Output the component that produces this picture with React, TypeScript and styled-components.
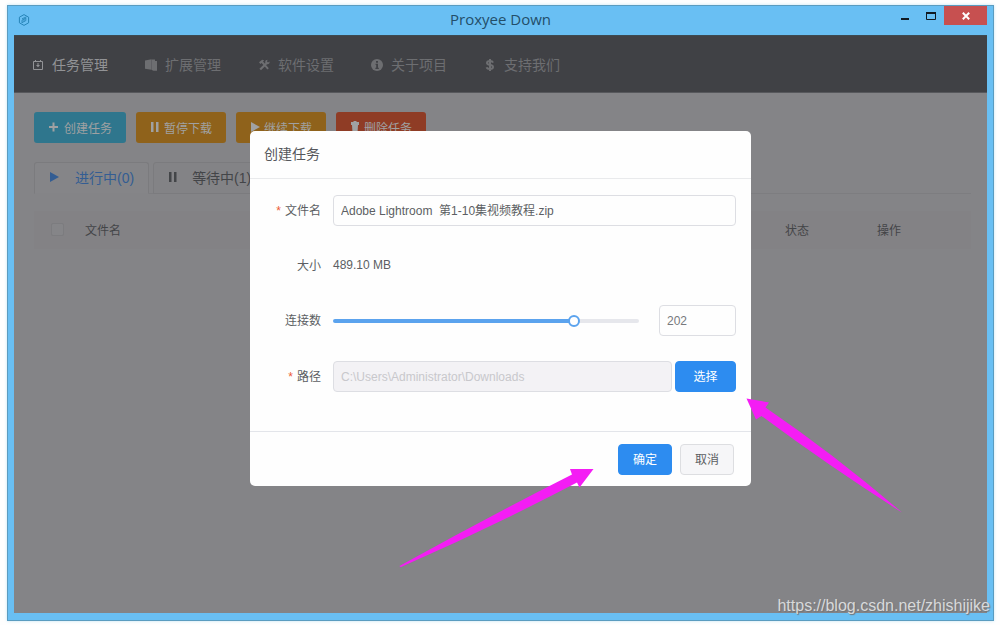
import React, { useState } from "react";
import styled, { createGlobalStyle } from "styled-components";

const GlobalStyle = createGlobalStyle`
  *, *::before, *::after { box-sizing: border-box; }
  body {
    margin: 0;
    background: #fefefe;
    font-family: "Liberation Sans", "Noto Sans CJK SC", sans-serif;
    font-size: 12px;
    color: #5c5e63;
  }
  button, input { font: inherit; }
`;

const Page = styled.div`
  display: flex;
  min-height: 100vh;
  padding: 5px 6px 4px 7px;
`;

const Window = styled.div`
  position: relative;
  flex: 1;
  min-width: 0;
  display: flex;
  flex-direction: column;
  padding: 0 6px 7px;
  background: #69bff3;
  border: 1px solid #5a9cc0;
  box-shadow: 0 0 3px #c4e4f4;
`;

const TitleBar = styled.header`
  display: grid;
  grid-template-columns: 1fr auto 1fr;
  height: 29px;
`;

const AppMark = styled.svg`
  width: 12px;
  height: 12px;
  margin: 8px 0 0 4px;
`;

const WindowTitle = styled.h1`
  margin: 0;
  font: 400 15px/27px "Open Sans", "Noto Sans", sans-serif;
  color: #234e69;
`;

const WindowControls = styled.div`
  display: flex;
  justify-content: flex-end;
  align-items: flex-start;
`;

const WindowButton = styled.button<{ $close?: boolean }>`
  display: flex;
  align-items: center;
  justify-content: center;
  width: ${(p) => (p.$close ? 43 : 26)}px;
  height: 19px;
  padding: 0;
  border: 0;
  background: ${(p) => (p.$close ? "#c75050" : "transparent")};
  color: ${(p) => (p.$close ? "#fff" : "#111a22")};
`;

const Client = styled.div`
  position: relative;
  flex: 1;
  display: flex;
  flex-direction: column;
  background: #848487;
`;

const Nav = styled.nav`
  display: flex;
  align-items: center;
  gap: 37px;
  height: 58px;
  padding: 1px 0 0 18px;
  background: #404145;
  border-top: 1px solid #3c4a52;
  border-bottom: 1px solid #57585c;
`;

const NavItem = styled.a<{ $active?: boolean }>`
  display: flex;
  align-items: center;
  gap: 8px;
  font-size: 14px;
  line-height: 20px;
  text-decoration: none;
  white-space: nowrap;
  color: ${(p) => (p.$active ? "#929396" : "#6d6e71")};
`;

const Content = styled.main`
  display: flex;
  flex-direction: column;
  padding: 19px 16px 20px 20px;
`;

const Toolbar = styled.div`
  display: flex;
  gap: 10px;
`;

const ToolButton = styled.button<{ $color: string }>`
  display: flex;
  align-items: center;
  gap: 4px;
  height: 31px;
  padding: 0 14px 1px;
  border: 0;
  border-radius: 3px;
  background: ${(p) => p.$color};
  color: #a0a1a2;
  white-space: nowrap;
`;

const Tabs = styled.div`
  display: flex;
  gap: 4px;
  margin-top: 19px;
  border-bottom: 1px solid #7d7d80;
`;

const Tab = styled.button<{ $active?: boolean }>`
  display: flex;
  align-items: center;
  gap: 14px;
  height: 32px;
  margin-bottom: -1px;
  padding: 0 14px 2px;
  border: 1px solid #7b7b7e;
  border-bottom-color: ${(p) => (p.$active ? "#848487" : "#7b7b7e")};
  border-radius: 3px 3px 0 0;
  background: ${(p) => (p.$active ? "#858588" : "#838386")};
  color: ${(p) => (p.$active ? "#335d93" : "#434548")};
  font-size: 14px;
  white-space: nowrap;
`;

const TaskTable = styled.table`
  width: 100%;
  margin-top: 17px;
  border-collapse: collapse;
  table-layout: fixed;
`;

const HeadCell = styled.th<{ $width?: number }>`
  width: ${(p) => (p.$width ? `${p.$width}px` : "auto")};
  height: 38px;
  padding: 0 10px 2px;
  background: #838285;
  color: #434548;
  font-weight: 400;
  text-align: left;
`;

const CheckBox = styled.input`
  appearance: none;
  display: block;
  width: 13px;
  height: 13px;
  margin: 0 0 0 7px;
  border: 1px solid #7c7c7f;
  border-radius: 2px;
  background: #858588;
`;

const Mask = styled.div`
  position: absolute;
  inset: 0;
  display: flex;
  justify-content: center;
  align-items: flex-start;
  padding-top: 96px;
`;

const Dialog = styled.form`
  position: relative;
  width: 501px;
  border-radius: 5px;
  background: #fefefe;
`;

const DialogTitle = styled.h2`
  margin: 0;
  padding: 0 14px;
  border-bottom: 1px solid #e9eaec;
  font-size: 14px;
  font-weight: 400;
  line-height: 47px;
  color: #55575c;
`;

const DialogBody = styled.div`
  display: flex;
  flex-direction: column;
  gap: 24px;
  padding: 16px 15px 39px;
`;

const Row = styled.div`
  display: flex;
  align-items: center;
  min-height: 30px;
`;

const SliderRow = styled(Row)`
  min-height: 33px;
`;

const Label = styled.label<{ $required?: boolean }>`
  width: 68px;
  padding: 0 12px 2px 0;
  text-align: right;
  white-space: nowrap;
  &::before {
    content: ${(p) => (p.$required ? '"*"' : "none")};
    margin-right: 4px;
    color: #ed5a35;
  }
`;

const TextBox = styled.input`
  flex: 1;
  min-width: 0;
  height: 31px;
  padding: 0 7px 2px;
  border: 1px solid #dddee3;
  border-radius: 4px;
  background: #fefefe;
  color: #5c5e63;
  &:disabled {
    padding-bottom: 0;
    background: #f3f2f5;
    color: #c8c8cc;
  }
`;

const NumberBox = styled(TextBox)`
  flex: 0 0 77px;
  margin-left: 20px;
  padding-bottom: 0;
  color: #77797d;
`;

const Rail = styled.div`
  flex: 1;
  display: flex;
  align-items: center;
  height: 4px;
  border-radius: 2px;
  background: linear-gradient(to right, #5ba3ee var(--fill), #e6e7ec var(--fill));
`;

const Range = styled.input`
  appearance: none;
  flex: none;
  width: calc(100% + 12px);
  height: 12px;
  margin: 0 -6px;
  background: transparent;
  &::-webkit-slider-thumb {
    appearance: none;
    width: 12px;
    height: 12px;
    border: 2px solid #5ba3ee;
    border-radius: 50%;
    background: #fff;
  }
`;

const Button = styled.button<{ $primary?: boolean; $wide?: boolean }>`
  width: ${(p) => (p.$wide ? 61 : 54)}px;
  height: 31px;
  padding: 0 0 2px;
  border: 1px solid ${(p) => (p.$primary ? "#2d8cf0" : "#dddee1")};
  border-radius: 4px;
  background: ${(p) => (p.$primary ? "#2d8cf0" : "#f6f6f8")};
  color: ${(p) => (p.$primary ? "#fff" : "#5c5e63")};
`;

const PathGroup = styled.div`
  flex: 1;
  display: flex;
  gap: 3px;
`;

const DialogFooter = styled.footer`
  display: flex;
  justify-content: flex-end;
  gap: 8px;
  padding: 12px 17px 11px;
  border-top: 1px solid #e3e5ea;
`;

const Pointers = styled.svg`
  position: absolute;
  top: 0;
  left: 0;
  width: 100%;
  height: 100%;
  overflow: visible;
  pointer-events: none;
`;

const Watermark = styled.a`
  position: absolute;
  right: 3px;
  bottom: 4px;
  font-size: 16px;
  line-height: 20px;
  color: #d8d9da;
  text-decoration: none;
  text-shadow: 1px 1px 1px #707376;
`;

const Icon = ({ width = 12, children }: { width?: number; children: React.ReactNode }) => (
  <svg width={width} height="12" viewBox={`0 0 ${width} 12`} fill="currentColor" aria-hidden="true">
    {children}
  </svg>
);

const PauseIcon = () => (
  <Icon width={10}>
    <path d="M1 1h2.500v10H1zM6 1h2.500v10H6z" />
  </Icon>
);

const PlayIcon = ({ width = 10 }: { width?: number }) => (
  <Icon width={width}>
    <path d="M1 1l9 5-9 5z" />
  </Icon>
);

const MAX_CONNECTIONS = 256;

export default function App() {
  const [name, setName] = useState("Adobe Lightroom  第1-10集视频教程.zip");
  const [connections, setConnections] = useState(202);
  const fill = `${((connections - 1) / (MAX_CONNECTIONS - 1)) * 100}%`;

  return (
    <Page>
      <GlobalStyle />
      <Window>
        <TitleBar>
          <AppMark viewBox="0 0 12 12" fill="none" stroke="#2684b8" aria-hidden="true">
            <path d="M6 .6l4.600 2.600v5.600L6 11.400 1.400 8.800V3.200z" />
            <path d="M4 9V6.200L7.800 4v2.600L4 8.600M4 4.800l4.600-2M6 5v2.400" strokeWidth=".9" />
          </AppMark>
          <WindowTitle>Proxyee Down</WindowTitle>
          <WindowControls>
            <WindowButton type="button" aria-label="最小化">
              <svg width="8" height="12" viewBox="0 0 8 12">
                <path d="M0 8h8v2H0z" fill="currentColor" />
              </svg>
            </WindowButton>
            <WindowButton type="button" aria-label="最大化">
              <svg width="10" height="8" viewBox="0 0 10 8">
                <path d="M.5 1v6.500h9V1" fill="none" stroke="currentColor" />
                <path d="M0 0h10v2H0z" fill="currentColor" />
              </svg>
            </WindowButton>
            <WindowButton type="button" $close aria-label="关闭">
              <svg width="8" height="8" viewBox="0 0 8 8">
                <path d="M.8.8l6.400 6.400M7.200.8L.8 7.200" stroke="currentColor" strokeWidth="2" />
              </svg>
            </WindowButton>
          </WindowControls>
        </TitleBar>

        <Client>
          <Nav>
            <NavItem href="#tasks" $active>
              <Icon>
                <path d="M1.500 2.500h9v8h-9zM3.500 1v1.500M8.500 1v1.500" fill="none" stroke="currentColor" />
                <path d="M5.500 4h1v2H8L6 8.200 4 6h1.500z" />
              </Icon>
              任务管理
            </NavItem>
            <NavItem href="#extensions">
              <Icon>
                <path d="M0 1.500L6.500.2v10.600L0 9.800zM6.800.5H10V2h2v9.800H8.500L6.800 11z" />
              </Icon>
              扩展管理
            </NavItem>
            <NavItem href="#settings">
              <Icon>
                <path d="M1 3.200L4.200.8l2 .4L5 2.600l5.800 6.600-1.400 1.400L3.600 4 2.400 5zM8 1.200L9.600.8 9 2.600l1 .8 1.600-.8c.3 1.800-1 3-2.600 2.600L3 11.200 1.400 9.800 7.400 4C7 2.800 7.200 1.800 8 1.200z" />
              </Icon>
              软件设置
            </NavItem>
            <NavItem href="#about">
              <Icon>
                <circle cx="6" cy="6" r="6" />
                <path d="M5 2h2v1.800H5zM4.600 4.800H7v4h.8V10H4.400V8.800h.8V6h-.6z" fill="#404145" />
              </Icon>
              关于项目
            </NavItem>
            <NavItem href="#support">
              <Icon>
                <path d="M9 3.600C8.600 2.400 7.400 2 6 2 4.300 2 3 2.600 3 3.900 3 6.700 9 4.900 9 8 9 9.400 7.600 10 6 10 4.300 10 3 9.500 2.600 8.200M6 0v12" fill="none" stroke="currentColor" strokeWidth="2" />
              </Icon>
              支持我们
            </NavItem>
          </Nav>

          <Content>
            <Toolbar>
              <ToolButton type="button" $color="#2f768d">
                <Icon>
                  <path d="M4.500 1.500h2v3.500H10v2H6.500v3.500h-2V7H1V5h3.500z" />
                </Icon>
                创建任务
              </ToolButton>
              <ToolButton type="button" $color="#8f621b">
                <PauseIcon />
                暂停下载
              </ToolButton>
              <ToolButton type="button" $color="#8f621b">
                <PlayIcon />
                继续下载
              </ToolButton>
              <ToolButton type="button" $color="#8f3c25">
                <Icon width={10}>
                  <path d="M3.500 0h3v1H9v3H8l-.5 8h-5L2 4H1V1h2.500z" />
                </Icon>
                删除任务
              </ToolButton>
            </Toolbar>

            <Tabs role="tablist">
              <Tab type="button" role="tab" aria-selected="true" $active>
                <PlayIcon width={12} />
                进行中(0)
              </Tab>
              <Tab type="button" role="tab" aria-selected="false">
                <PauseIcon />
                等待中(1)
              </Tab>
            </Tabs>

            <TaskTable>
              <thead>
                <tr>
                  <HeadCell $width={41}>
                    <CheckBox type="checkbox" aria-label="全选" />
                  </HeadCell>
                  <HeadCell>文件名</HeadCell>
                  <HeadCell $width={92}>状态</HeadCell>
                  <HeadCell $width={104}>操作</HeadCell>
                </tr>
              </thead>
            </TaskTable>
          </Content>

          <Mask>
            <Dialog role="dialog" aria-labelledby="dialog-title" onSubmit={(e) => e.preventDefault()}>
              <DialogTitle id="dialog-title">创建任务</DialogTitle>
              <DialogBody>
                <Row>
                  <Label htmlFor="file-name" $required>文件名</Label>
                  <TextBox id="file-name" value={name} onChange={(e) => setName(e.target.value)} />
                </Row>
                <Row>
                  <Label as="span">大小</Label>
                  <span>489.10 MB</span>
                </Row>
                <SliderRow>
                  <Label htmlFor="connections">连接数</Label>
                  <Rail style={{ "--fill": fill } as React.CSSProperties}>
                    <Range
                      id="connections"
                      type="range"
                      min={1}
                      max={MAX_CONNECTIONS}
                      value={connections}
                      onChange={(e) => setConnections(Number(e.target.value))}
                    />
                  </Rail>
                  <NumberBox
                    aria-label="连接数"
                    inputMode="numeric"
                    value={connections}
                    onChange={(e) => setConnections(Math.min(MAX_CONNECTIONS, Number(e.target.value) || 1))}
                  />
                </SliderRow>
                <Row>
                  <Label htmlFor="path" $required>路径</Label>
                  <PathGroup>
                    <TextBox id="path" disabled value="C:\Users\Administrator\Downloads" />
                    <Button type="button" $primary $wide>选择</Button>
                  </PathGroup>
                </Row>
              </DialogBody>
              <DialogFooter>
                <Button type="submit" $primary>确定</Button>
                <Button type="button">取消</Button>
              </DialogFooter>
              <Pointers fill="#f41df4" aria-hidden="true">
                <path d="M496.500 267.500L519 271.500 515.500 276.500Q585 324 652 381.500 580 336 511.500 285L506 288.500z" />
                <path d="M343.500 338L320 338 322 343.500Q238 386 149.500 435 150 436 151 436 240 397 327 351.500L329.500 356.500z" />
              </Pointers>
            </Dialog>
          </Mask>
        </Client>
        <Watermark href="https://blog.csdn.net/zhishijike">https://blog.csdn.net/zhishijike</Watermark>
      </Window>
    </Page>
  );
}
